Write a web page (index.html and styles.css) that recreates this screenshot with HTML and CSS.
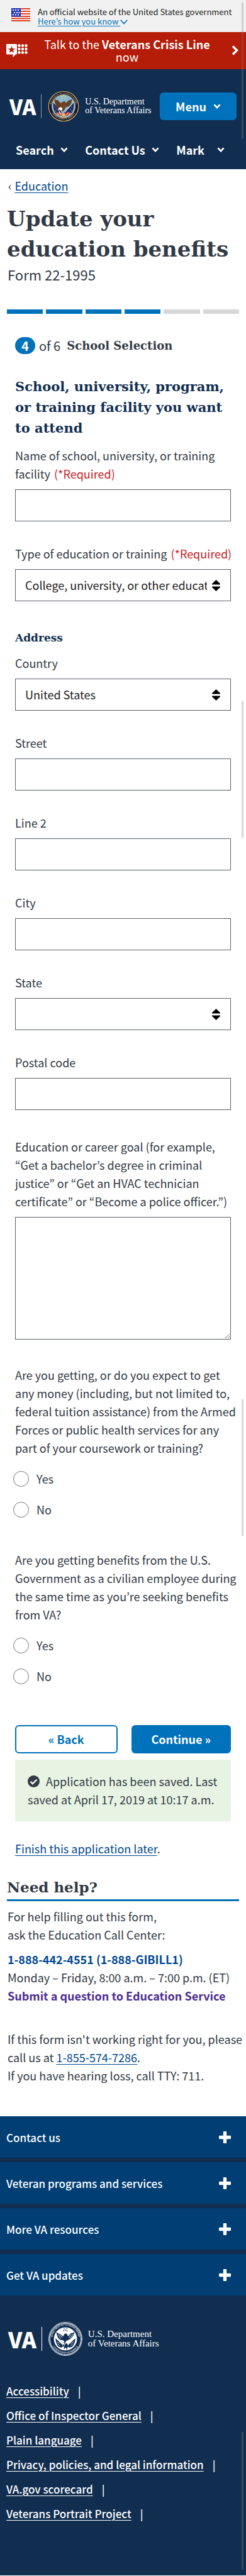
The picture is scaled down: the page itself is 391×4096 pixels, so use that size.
FILE: index.html
```html
<!DOCTYPE html>
<html lang="en">
<head>
<meta charset="utf-8">
<meta name="viewport" content="width=device-width, initial-scale=1">
<title>Update your education benefits</title>
<link rel="stylesheet" href="styles.css">
</head>
<body>
<svg class="defs" aria-hidden="true">
  <symbol id="chev" viewBox="0 0 12 8"><path d="M1.4 1.4 6 6.2l4.600-4.800" fill="none" stroke="currentColor" stroke-width="2.600"/></symbol>
  <symbol id="sort" viewBox="0 0 13 18"><path d="M6.500 0 13 6.200V7.500H0V6.200ZM0 10.500H13V11.800L6.500 18 0 11.800Z"/></symbol>
  <symbol id="plus" viewBox="0 0 18 18"><path d="M7.500 0h3q1 0 1 1v5.500h5.500q1 0 1 1v3q0 1-1 1H11.500V17q0 1-1 1h-3q-1 0-1-1v-5.500H1q-1 0-1-1v-3q0-1 1-1h5.500V1q0-1 1-1Z" fill="currentColor"/></symbol>
</svg>

<div class="gov">
  <svg class="flag" viewBox="0 0 30 21" aria-hidden="true">
    <path d="M0 0h30v21H0z" fill="#fff"/>
    <path d="M0 0h30v2H0zM0 4h30v2H0zM0 8h30v2H0zM0 12h30v2H0zM0 15.500h30v2H0zM0 19h30v2H0z" fill="#dd3d20"/>
    <path d="M0 0h15v13.500H0z" fill="#1f35b5"/>
    <path d="M2 2h2v2H2zM6 2h2v2H6zM10 2h2v2h-2zM4 6h2v2H4zM8 6h2v2H8zM11.500 6h2v2h-2zM2 9.500h2v2H2zM6 9.500h2v2H6zM10 9.500h2v2h-2z" fill="#fff"/>
  </svg>
  <div>An official website of the United States government<br>
    <a href="#know">Here’s how you know </a><svg class="thin-chev" viewBox="0 0 12 8" aria-hidden="true"><path d="M.7.8 6 6.800 11.300.8" fill="none" stroke="currentColor" stroke-width="1.600"/></svg></div>
</div>

<a class="crisis" href="#crisis">
  <svg class="crisis-icon" viewBox="0 0 34 21" aria-hidden="true">
    <path d="M1 0h15q1 0 1 1v14.500q0 1-1 1h-1L10.500 21v-4.500H1q-1 0-1-1V1q0-1 1-1Z" fill="#fff"/>
    <path d="m8.500 3 1.500 4.200h4.400l-3.500 2.600 1.300 4.200-3.700-2.600L4.800 14l1.300-4.200L2.600 7.200H7Z" fill="#b51d09"/>
    <g fill="#fff"><circle cx="20.500" cy="2.500" r="2.200"/><circle cx="26" cy="2.500" r="2.200"/><circle cx="31.500" cy="2.500" r="2.200"/><circle cx="20.500" cy="8" r="2.200"/><circle cx="26" cy="8" r="2.200"/><circle cx="31.500" cy="8" r="2.200"/><circle cx="20.500" cy="13.500" r="2.200"/><circle cx="26" cy="13.500" r="2.200"/><circle cx="31.500" cy="13.500" r="2.200"/></g>
  </svg>
  <span>Talk to the <b>Veterans Crisis Line</b> now</span>
  <svg class="crisis-arrow" viewBox="0 0 11 16" aria-hidden="true"><path d="m2 1.500 6.500 6.500L2 14.500" fill="none" stroke="#fff" stroke-width="3.400"/></svg>
</a>

<header class="top">
  <div class="brand-row">
    <a class="brand" href="#home">
      <span class="va">VA</span><span class="rule"></span>
      <svg class="seal" viewBox="0 0 100 100" role="img" aria-label="Seal">
        <defs><path id="arcTop" d="M12 58A39 39 0 1 1 88 58"/><path id="arcBot" d="M8.500 62A43.500 43.500 0 0 0 91.500 62"/></defs>
        <circle cx="50" cy="50" r="49.500" fill="#15163c"/>
        <circle cx="50" cy="50" r="47.500" fill="none" stroke="#d9b94f" stroke-width="2.400"/>
        <circle cx="50" cy="50" r="37" fill="#86b8d4" stroke="#d9b94f" stroke-width="1.500"/>
        <text class="ring gold"><textPath href="#arcTop" startOffset="50%" text-anchor="middle">DEPARTMENT OF VETERANS AFFAIRS</textPath></text>
        <text class="ring gold"><textPath href="#arcBot" startOffset="50%" text-anchor="middle">UNITED STATES OF AMERICA</textPath></text>
        <g fill="#f0d95a"><circle cx="50" cy="16" r="2"/><circle cx="44" cy="19" r="2"/><circle cx="56" cy="19" r="2"/><circle cx="45" cy="25" r="2"/><circle cx="55" cy="25" r="2"/></g>
        <path d="M18 38 48 72 40 80 26 74Q15 58 18 38ZM82 38 52 72l8 8 14-6q11-16 8-36Z" fill="#20285f"/>
        <path d="M18 37 45 68M82 37 55 68" stroke="#e8e4d4" stroke-width="2"/>
        <g fill="#fff"><circle cx="24" cy="52" r="1.200"/><circle cx="28" cy="59" r="1.200"/><circle cx="25" cy="65" r="1.200"/><circle cx="76" cy="52" r="1.200"/><circle cx="72" cy="59" r="1.200"/><circle cx="75" cy="65" r="1.200"/><circle cx="68" cy="54" r="1.200"/></g>
        <path d="M22 27q7 5 10 3 3 5 10 10l5-5 7-1 4 5q6-5 9-9 3 2 10-3 0 9-4 13l-4 7-6 4-7 3-4 9-8 5-7-4-2-7-6-4-4-9Q20 37 22 27Z" fill="#6e4424"/>
        <path d="m28 33 8 15m-12-9 11 13m37-19-8 15m12-9L65 52" stroke="#3c2413" stroke-width="1.500"/>
        <path d="M40 53q-8 2-7 8l4-1 5 4 5-5q-1-6-7-6Z" fill="#fff"/><path d="m33 59-2 5 5-2Z" fill="#e9b93c"/>
        <path d="M24 70q10-2 16 0l9 5 11-6q8-1 15 1-3 8-12 9l-8 1-5 7-6-7q-14 0-20-10Z" fill="#c43a3e"/>
        <path d="m28 71 8 7m-1-9 8 9m22-8-6 8m14-6-7 6M35 63l6 12m2-12 2 11" stroke="#fff" stroke-width="2"/>
        <path d="m46 73-3 12 5-5 2 8 3-8 5 5-4-12Z" fill="#e5c45b"/>
      </svg>
      <span class="dept">U.S. Department<br>of Veterans Affairs</span>
    </a>
    <button class="menu" type="button">Menu <svg class="chev"><use href="#chev"/></svg></button>
  </div>
  <nav class="nav">
    <button type="button">Search <svg class="chev"><use href="#chev"/></svg></button>
    <button type="button">Contact Us <svg class="chev"><use href="#chev"/></svg></button>
    <button type="button" class="user">Mark <svg class="chev"><use href="#chev"/></svg></button>
  </nav>
</header>

<main>
  <nav class="crumb"><span>‹</span><a href="#education">Education</a></nav>
  <h1>Update your education benefits</h1>
  <p class="sub">Form 22-1995</p>
  <div class="steps"><i class="on"></i><i class="on"></i><i class="on"></i><i class="on"></i><i></i><i></i></div>

  <form class="form">
    <div class="step"><span class="num">4</span><span>of 6</span><b>School Selection</b></div>
    <h2>School, university, program,<br>or training facility you want<br>to attend</h2>

    <div class="field"><label for="name">Name of school, university, or training<br>facility <em>(*Required)</em></label><input id="name" type="text"></div>
    <div class="field"><label for="type">Type of education or training <em>(*Required)</em></label>
      <div class="select"><select id="type"><option>College, university, or other education</option></select><svg><use href="#sort"/></svg></div></div>
    <h3>Address</h3>
    <div class="field"><label for="country">Country</label>
      <div class="select"><select id="country"><option>United States</option></select><svg><use href="#sort"/></svg></div></div>
    <div class="field"><label for="street">Street</label><input id="street" type="text"></div>
    <div class="field"><label for="line2">Line 2</label><input id="line2" type="text"></div>
    <div class="field"><label for="city">City</label><input id="city" type="text"></div>
    <div class="field"><label for="state">State</label>
      <div class="select"><select id="state"><option></option></select><svg><use href="#sort"/></svg></div></div>
    <div class="field"><label for="zip">Postal code</label><input id="zip" type="text"></div>
    <div class="field goal"><label for="goal">Education or career goal (for example,<br>“Get a bachelor’s degree in criminal<br>justice” or “Get an HVAC technician<br>certificate” or “Become a police officer.”)</label><textarea id="goal"></textarea></div>

    <fieldset>
      <legend>Are you getting, or do you expect to get<br>any money (including, but not limited to,<br>federal tuition assistance) from the Armed<br>Forces or public health services for any<br>part of your coursework or training?</legend>
      <label class="radio"><input type="radio" name="money">Yes</label>
      <label class="radio"><input type="radio" name="money">No</label>
    </fieldset>
    <fieldset>
      <legend>Are you getting benefits from the U.S.<br>Government as a civilian employee during<br>the same time as you’re seeking benefits<br>from VA?</legend>
      <label class="radio"><input type="radio" name="civ">Yes</label>
      <label class="radio"><input type="radio" name="civ">No</label>
    </fieldset>

    <div class="actions"><button type="button" class="back">« Back</button><button type="button" class="next">Continue »</button></div>
    <p class="saved"><svg viewBox="0 0 19 19" aria-hidden="true"><circle cx="9.500" cy="9.500" r="9.500" fill="#323a45"/><path d="m4.500 9.800 3.400 3.400 6.600-6.600" fill="none" stroke="#e7f4e4" stroke-width="2.600"/></svg>Application has been saved. Last saved at April 17, 2019 at 10:17 a.m.</p>
    <p class="finish"><a href="#later">Finish this application later</a>.</p>
  </form>

  <section class="help">
    <h2>Need help?</h2>
    <p>For help filling out this form,<br>ask the Education Call Center:</p>
    <p><a class="strong" href="#call">1-888-442-4551 (1-888-GIBILL1)</a><br>Monday – Friday, 8:00 a.m. – 7:00 p.m. (ET)<br><a class="strong seen" href="#ask">Submit a question to Education Service</a></p>
    <p class="tty">If this form isn't working right for you, please<br>call us at <a href="#tel">1-855-574-7286</a>.<br>If you have hearing loss, call TTY: 711.</p>
  </section>
</main>

<footer>
  <div class="accordion">
    <button type="button">Contact us<svg><use href="#plus"/></svg></button>
    <button type="button">Veteran programs and services<svg><use href="#plus"/></svg></button>
    <button type="button">More VA resources<svg><use href="#plus"/></svg></button>
    <button type="button">Get VA updates<svg><use href="#plus"/></svg></button>
  </div>
  <a class="brand foot" href="#home">
    <span class="va">VA</span><span class="rule"></span>
    <svg class="seal" viewBox="0 0 100 100" role="img" aria-label="Seal">
      <circle cx="50" cy="50" r="49" fill="none" stroke="#fff" stroke-width="1.500"/>
      <circle cx="50" cy="50" r="46" fill="none" stroke="#fff" stroke-width="3" stroke-dasharray="2.200 1"/>
      <circle cx="50" cy="50" r="34" fill="#fff"/>
      <text class="ring pale"><textPath href="#arcTop" startOffset="50%" text-anchor="middle">DEPARTMENT OF VETERANS AFFAIRS</textPath></text>
      <text class="ring pale"><textPath href="#arcBot" startOffset="50%" text-anchor="middle">UNITED STATES OF AMERICA</textPath></text>
      <g fill="#112e51"><circle cx="50" cy="24" r="1.600"/><circle cx="46" cy="20" r="1.600"/><circle cx="54" cy="20" r="1.600"/><circle cx="45" cy="26" r="1.600"/><circle cx="55" cy="26" r="1.600"/>
      <path d="M24 30q8 6 11 5l8 8 4-8 6-1 5 8 8-9q4 1 10-4-1 10-5 14l-5 6-7 4-6 3-4 6-9-2-5-7-6-5-3-7q-3-5-2-11Z"/>
      <path d="M21 48 42 68l-3 8-9-3Q21 63 21 48ZM79 48 58 68l3 8 9-3q9-10 9-25Z"/>
      <path d="m46 63-6 11 6-2v9l4-6 5 7 1-9 6 2-8-12Z"/></g>
      <path d="m28 35 8 14m-3-14 7 12m33-12-9 14m3-13-7 11M25 58l8 6m-6 0 7 7m40-13-8 6m6 0-7 7M38 57l10 10m6-12-8 16" stroke="#fff" stroke-width="1.500"/>
      <path d="M40 53q-7 1-6 6l6-1 4 3 3-4Z" fill="#fff"/>
    </svg>
    <span class="dept">U.S. Department<br>of Veterans Affairs</span>
  </a>
  <ul class="links">
    <li><a href="#a">Accessibility</a></li>
    <li><a href="#b">Office of Inspector General</a></li>
    <li><a href="#c">Plain language</a></li>
    <li><a href="#d">Privacy, policies, and legal information</a></li>
    <li><a href="#e">VA.gov scorecard</a></li>
    <li><a href="#f">Veterans Portrait Project</a></li>
  </ul>
</footer>
<i class="scroll s1"></i><i class="scroll s2"></i><i class="scroll s3"></i><i class="scroll s4"></i>
</body>
</html>
```
FILE: styles.css
```css
* { box-sizing: border-box; }
body {
  margin: 0;
  position: relative;
  color: #323a45;
  background: #fff;
  font: 18px/29px "Noto Sans CJK KR", "Noto Sans", sans-serif;
}
h1, h2, h3, p, ul, fieldset, legend { margin: 0; padding: 0; border: 0; }
button, input, select, textarea { font: inherit; color: inherit; border-radius: 0; }
button { border: 0; background: none; padding: 0; }
a { color: #004795; text-underline-offset: 3px; text-decoration-thickness: 1px; }
svg { display: block; flex: none; }
.defs { position: absolute; width: 0; height: 0; }

.gov { display: flex; gap: 12px; padding: 11px 12px 10px 18px; background: #f1f1f1; color: #212121; font-size: 13px; line-height: 15px; white-space: nowrap; }
.gov a { color: #0071bb; text-underline-offset: 2px; }
.flag { width: 30px; height: 21px; margin-top: 2px; }
.thin-chev { display: inline; width: 12px; height: 8px; color: #0071bb; }

.crisis { display: flex; align-items: center; padding: 9px 12px 10px 10px; background: #b51d09; color: #fff; line-height: 20px; text-decoration: none; text-align: center; }
.crisis span { flex: 1; padding: 0 30px 0 22px; }
.crisis-icon { width: 34px; height: 21px; }
.crisis-arrow { width: 11px; height: 16px; }

.top { background: #112e51; color: #fff; padding: 34px 15px; padding-bottom: 15px; }
.brand-row { display: flex; align-items: center; justify-content: space-between; }
.brand { display: flex; align-items: center; color: #fff; text-decoration: none; }
.va { font-size: 33px; line-height: 50px; font-weight: 900; }
.rule { width: 1px; height: 38px; margin: 0 10px 0 8px; background: #8796a8; }
.seal { width: 50px; height: 50px; }
.ring { font: bold 6px "Liberation Serif", serif; }
.gold { fill: #d9c476; }
.pale { fill: #fff; }
.dept { margin-left: 9px; font: 14px/14px "Liberation Serif", serif; white-space: nowrap; }
.menu { width: 122px; height: 44px; border-radius: 6px; background: #0071bb; font-weight: 700; display: flex; align-items: center; justify-content: center; gap: 11px; }
.chev { width: 12px; height: 8px; }
.nav { display: flex; justify-content: space-between; padding: 28px 19px 0 10px; }
.nav button { display: flex; align-items: center; gap: 10px; font-weight: 700; line-height: 32px; }
.nav .user { gap: 20px; }

main { padding: 12px 11px 50px; }
.crumb { display: flex; gap: 5px; padding-left: 2px; }
h1, h2, h3, .step b { font-family: "DejaVu Serif", serif; font-weight: 700; }
h1 { margin-top: 14px; font-size: 34px; line-height: 48px; }
.sub { padding-left: 1px; font-size: 22px; line-height: 28px; margin-top: 2px; }
.steps { display: flex; gap: 5px; margin-top: 42px; }
.steps i { flex: 1; height: 7px; background: #d6d7d9; }
.steps .on { background: #0071bb; }

.form { padding: 0 13px; }
.step { display: flex; align-items: center; gap: 6px; margin-top: 34px; font-size: 20px; line-height: 33px; }
.step b { margin-left: 4px; font-size: 18px; white-space: nowrap; }
.num { width: 32px; border-radius: 14px; background: #0071bb; color: #fff; font-weight: 700; line-height: 27px; text-align: center; }
.form h2 { margin: 32px 0 13px; color: #112e51; font-size: 21px; line-height: 33px; white-space: nowrap; }
.form h3 { margin: 44px 0 11px; color: #112e51; font-size: 17px; line-height: 29px; }
.field { margin-bottom: 37px; }
.field label { display: block; margin-bottom: 10px; white-space: nowrap; }
.field em { font-style: normal; color: #cd2026; margin-left: 2px; }
.field input, .field select, .field textarea { display: block; width: 100%; height: 51px; border: 1px solid #5b616b; background: #fff; color: #212121; }
.select { position: relative; }
.select select { appearance: none; padding: 0 37px 0 15px; }
.select svg { position: absolute; right: 17px; top: 17px; width: 13px; height: 18px; pointer-events: none; }
.form .field textarea { height: 195px; }
.goal { margin: 44px 0 42px; }

fieldset { margin-bottom: 31px; min-width: 0; }
legend { margin-bottom: 20px; white-space: nowrap; }
.radio { display: flex; align-items: center; gap: 12px; height: 29px; margin-bottom: 20px; }
.radio input { appearance: none; width: 25px; height: 25px; margin: 0 0 0 -3px; border: 1px solid #757575; border-radius: 50%; background: #fff; }

.actions { display: flex; gap: 22px; margin-top: 43px; }
.actions button { flex: 1; height: 45px; border-radius: 6px; font-weight: 700; }
.actions .back { border: 2px solid #0071bb; color: #0071bb; }
.actions .next { background: #0071bb; color: #fff; }
.saved { margin-top: 10px; padding: 20px; background: #e7f4e4; }
.saved svg { display: inline; width: 19px; height: 19px; margin-right: 10px; vertical-align: -2px; }
.finish { margin-top: 29px; }

.help h2 { margin: 27px 0 10px; border-bottom: 3px solid #0071bb; font-size: 23px; line-height: 39px; }
.help p { padding-left: 1px; white-space: nowrap; }
.help p + p { margin-top: 10px; }
.help p.tty { margin-top: 40px; }
.strong { font-weight: 700; text-decoration: none; }
.help .seen { color: #4c2c92; }

footer { background: #112e51; color: #fff; padding-bottom: 74px; font-size: 17px; }
.accordion { display: grid; gap: 7px; }
.accordion button { display: flex; justify-content: space-between; align-items: center; height: 66px; padding: 0 24px 0 10px; background: #003e73; font-weight: 500; }
.accordion svg { width: 19px; height: 19px; }
.foot { padding: 42px 13px 0; }
.foot .seal { width: 54px; height: 54px; }
.foot .va { font-size: 35px; }
.foot .rule { background: #fff; }
.foot .dept { font-size: 15px; line-height: 15px; }
.links { list-style: none; margin-top: 41px; padding-left: 10px; }
.links li { line-height: 29px; margin-bottom: 10px; font-weight: 500; }
.links a { color: #fff; }
.links li::after { content: "|"; margin-left: 14px; }

.scroll { position: absolute; right: 4px; width: 3px; background: #808080; opacity: .3; }
.s1 { top: 4px; height: 217px; }
.s2 { top: 1115px; height: 217px; }
.s3 { top: 2225px; height: 217px; }
.s4 { top: 3867px; height: 218px; }
```
